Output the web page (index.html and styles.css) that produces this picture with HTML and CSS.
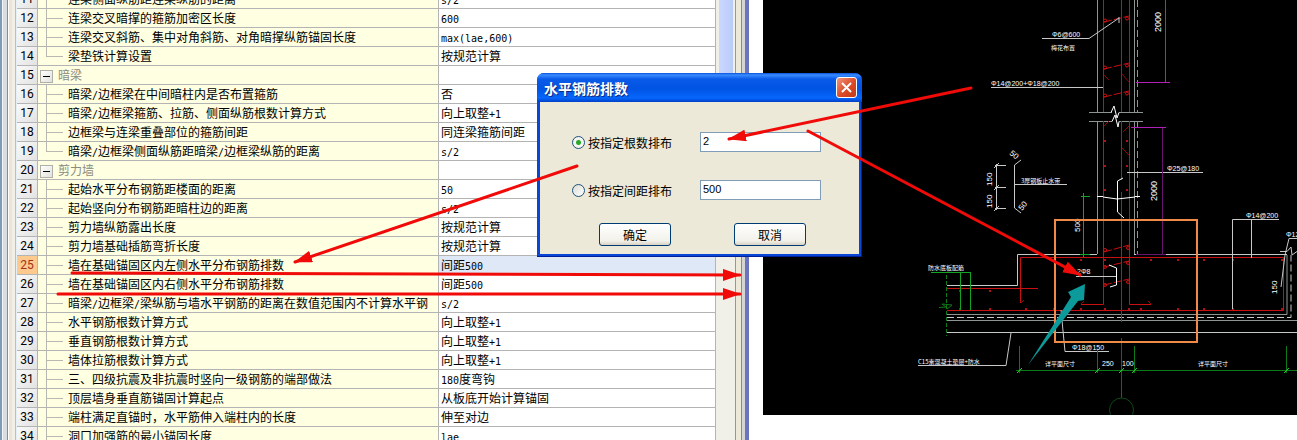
FILE: index.html
```html
<!DOCTYPE html>
<html lang="zh-CN">
<head>
    <meta charset="UTF-8">
    <meta name="viewport" content="width=device-width, initial-scale=1.0">
    <title>水平钢筋排数</title>
    <link rel="stylesheet" href="styles.css">
</head>
<body>
    <div class="workspace">
        <!-- 计算设置 -->
        <section class="settings">
            <div class="frame-left"></div>
            <div class="grid-area">
                <table class="grid">
                    <colgroup>
                        <col class="col-no">
                        <col class="col-name">
                        <col>
                    </colgroup>
                    <tbody>
                        <tr><th>11</th><td class="name">连梁侧面纵筋距连梁纵筋的距离</td><td><span class="code">s/2</span></td></tr>
                        <tr><th>12</th><td class="name">连梁交叉暗撑的箍筋加密区长度</td><td><span class="code">600</span></td></tr>
                        <tr><th>13</th><td class="name">连梁交叉斜筋、集中对角斜筋、对角暗撑纵筋锚固长度</td><td><span class="code">max(lae,600)</span></td></tr>
                        <tr><th>14</th><td class="name last">梁垫铁计算设置</td><td>按规范计算</td></tr>
                        <tr><th>15</th><td class="group"><button class="toggle" aria-label="折叠暗梁"></button>暗梁</td><td></td></tr>
                        <tr><th>16</th><td class="name">暗梁<span class="code">/</span>边框梁在中间暗柱内是否布置箍筋</td><td>否</td></tr>
                        <tr><th>17</th><td class="name">暗梁<span class="code">/</span>边框梁箍筋、拉筋、侧面纵筋根数计算方式</td><td>向上取整<span class="code">+1</span></td></tr>
                        <tr><th>18</th><td class="name">边框梁与连梁重叠部位的箍筋间距</td><td>同连梁箍筋间距</td></tr>
                        <tr><th>19</th><td class="name last">暗梁<span class="code">/</span>边框梁侧面纵筋距暗梁<span class="code">/</span>边框梁纵筋的距离</td><td><span class="code">s/2</span></td></tr>
                        <tr><th>20</th><td class="group"><button class="toggle" aria-label="折叠剪力墙"></button>剪力墙</td><td></td></tr>
                        <tr><th>21</th><td class="name">起始水平分布钢筋距楼面的距离</td><td><span class="code">50</span></td></tr>
                        <tr><th>22</th><td class="name">起始竖向分布钢筋距暗柱边的距离</td><td><span class="code">s/2</span></td></tr>
                        <tr><th>23</th><td class="name">剪力墙纵筋露出长度</td><td>按规范计算</td></tr>
                        <tr><th>24</th><td class="name">剪力墙基础插筋弯折长度</td><td>按规范计算</td></tr>
                        <tr class="selected"><th>25</th><td class="name">墙在基础锚固区内左侧水平分布钢筋排数</td><td>间距<span class="code">500</span></td></tr>
                        <tr><th>26</th><td class="name">墙在基础锚固区内右侧水平分布钢筋排数</td><td>间距<span class="code">500</span></td></tr>
                        <tr><th>27</th><td class="name">暗梁<span class="code">/</span>边框梁<span class="code">/</span>梁纵筋与墙水平钢筋的距离在数值范围内不计算水平钢</td><td><span class="code">s/2</span></td></tr>
                        <tr><th>28</th><td class="name">水平钢筋根数计算方式</td><td>向上取整<span class="code">+1</span></td></tr>
                        <tr><th>29</th><td class="name">垂直钢筋根数计算方式</td><td>向上取整<span class="code">+1</span></td></tr>
                        <tr><th>30</th><td class="name">墙体拉筋根数计算方式</td><td>向上取整<span class="code">+1</span></td></tr>
                        <tr><th>31</th><td class="name">三、四级抗震及非抗震时竖向一级钢筋的端部做法</td><td><span class="code">180</span>度弯钩</td></tr>
                        <tr><th>32</th><td class="name">顶层墙身垂直筋锚固计算起点</td><td>从板底开始计算锚固</td></tr>
                        <tr><th>33</th><td class="name">端柱满足直锚时，水平筋伸入端柱内的长度</td><td>伸至对边</td></tr>
                        <tr><th>34</th><td class="name">洞口加强筋的最小锚固长度</td><td><span class="code">lae</span></td></tr>
                    </tbody>
                </table>
            </div>
            <div class="scrollbar"><div class="thumb"></div></div>
            <div class="frame-right"></div>
        </section>

        <!-- 基础剖面图 -->
        <section class="drawing">
            <svg viewBox="763 0 534 415" fill="none" stroke-width="1">
                <!-- 墙身轮廓 -->
                <g stroke="#8d9692">
                    <path d="M1097.5 0V112M1134.5 0V112M1097.5 121V254M1134.5 121V254"/>
                    <path d="M1137.5 0V112M1137.5 121V254" stroke-dasharray="7 3"/>
                    <path d="M1089 112.5H1112M1119 112.5H1143M1089 121.5H1112M1119 121.5H1143"/>
                    <path d="M947 314.5H1287V255M947 320.5H1297"/>
                    <path d="M947 317.5H1291V255" stroke="#c8c8c8" stroke-dasharray="7 3"/>
                </g>
                <path d="M1111 112.5L1114 106L1117 118L1119 112.5M1112 121.5L1115 115L1118 127L1119 121.5" stroke="#fff"/>
                <g stroke="#c4c9c6">
                    <path d="M947 285.5H1017.500V254.500H1097M1134 254.500H1287"/>
                    <path d="M947 332.5H1297"/>
                </g>

                <!-- 钢筋 -->
                <g stroke="#c81010">
                    <path d="M1103.5 0V112M1129.500 0V112M1121.500 0V112M1121.500 121V180M1121.500 192V322M1121.500 338V398"/>
                    <path d="M1103.500 121V304.500H1081M1129.500 121V304.500H1151"/>
                    <path d="M947 288.500H1038M1020.500 303V257.500H1283.500V310.500H947"/>
                    <path d="M1081 304l3-3M1151 304l-3-3M1021 303l3-3" stroke="#8a0808"/>
                    <path d="M1104 22L1129 16M1104 69L1129 63M1104 97L1129 91M1104 252L1129 245M1104 267L1129 261M1104 285L1129 279" stroke-dasharray="8 2"/>
                    <path d="M1104 75L1109 80M1122 74L1129 82M1104 126L1109 121M1123 132L1129 126M1122 148L1129 155" stroke="#8a0808"/>
                </g>
                <g fill="none" stroke="#d01010">
                    <circle cx="1105" cy="20.500" r="1.500"/><circle cx="1127" cy="18.500" r="1.500"/>
                    <circle cx="1105" cy="67.500" r="1.500"/><circle cx="1127" cy="65.500" r="1.500"/>
                    <circle cx="1105" cy="95.500" r="1.500"/><circle cx="1127" cy="93.500" r="1.500"/>
                    <circle cx="1105" cy="250" r="1.500"/><circle cx="1128" cy="248" r="1.500"/>
                    <circle cx="1105" cy="267" r="1.500"/><circle cx="1128" cy="263" r="1.500"/>
                    <circle cx="1105" cy="285" r="1.500"/><circle cx="1128" cy="282" r="1.500"/>
                </g>
                <path d="M1104 141h2M1104 166h2M1104 190h2M1126 141h2M1126 166h2M1126 190h2M959 309h2M989 309h2M1025 309h2M1053 309h2M1080 309h2M1104 309h2M1128 309h2M1140 309h2M1177 309h2M1203 309h2M1232 309h2M1281 309h2M989 291h2M959 291h2M1080 260h2M1104 260h2M1150 260h2M1177 260h2M1203 260h2M1232 260h2M1281 260h2" stroke="#b01010" stroke-width="2"/>

                <!-- 止水带 -->
                <g stroke="#fff">
                    <path d="M1123 178L1117.500 181V212L1124 218M1097 196.500H1103M1103 197L1117 199L1135 197M1135 196.500H1140"/>
                    <path d="M1109 265L1116.500 268V285L1110 287"/>
                </g>

                <!-- 引线 -->
                <g stroke="#c8c8c8">
                    <path d="M1042 38.500H1089L1119 18M1119 17v6"/>
                    <path d="M991 87.500H1103"/>
                    <path d="M1127 172.500H1203"/>
                    <path d="M1232.500 309V219.500H1279M1251.500 220V258"/>
                    <path d="M1297 238.500H1289L1285 255L1281 287M1280 251.500H1287L1291 247L1292 255L1297 251.500"/>
                    <path d="M1076 276.500H1116"/>
                    <path d="M1061 310L1065 351.500H1109"/>
                    <path d="M918 365.500H1006L1011 333"/>
                    <path d="M1021 160L1014.500 165V208L1021 213M1014 184.500H1067"/>
                    <path d="M996.500 164V210M995 165.500H1006M995 187.500H1006M995 208.500H1006M994 168l5-5M994 190l5-5M994 211l5-5"/>
                </g>

                <!-- 尺寸线 -->
                <g stroke="#b020b8">
                    <path d="M1165.500 0V82M1136 82.500H1170M1131 127.500H1166"/>
                    <path d="M1162.500 128V254M1136 254.500H1166" stroke="#67146e"/>
                </g>
                <g stroke="#12a522">
                    <path d="M1083.500 193V257M1081 196.500H1090M1080 254.500H1090"/>
                    <path d="M931 272.500H971M960.500 272V310M970.500 272V310"/>
                </g>
                <g stroke="#0b7a17">
                    <path d="M946.500 275V336" stroke-dasharray="4 2"/>
                    <path d="M939 307.500L946 307L942 304L952 305L947 309"/>
                    <path d="M1016 370.500H1297M1019.500 346V373M1097.500 350V373M1134.500 346V373M1286.500 346V373"/>
                    <path d="M1017 373l5-5M1095 373l5-5M1119 373l5-5M1132 373l5-5M1284 373l5-5" stroke="#1fd02f"/>
                    <circle cx="1121.500" cy="410" r="12" stroke="#0b4a12"/>
                </g>

                <!-- 标注文字 -->
                <g class="note">
                    <text x="1052" y="37">Φ6@600</text>
                    <text x="1051" y="50" class="cn">梅花布置</text>
                    <text x="991" y="86">Φ14@200+Φ18@200</text>
                    <text x="1167" y="171">Φ25@180</text>
                    <text x="1246" y="218">Φ14@200</text>
                    <text x="1286" y="237">Φ12</text>
                    <text x="1077" y="274">2Φ8</text>
                    <text x="1072" y="350">Φ18@150</text>
                    <text x="1102" y="366">250</text>
                    <text x="1122" y="366">100</text>
                    <text x="1021" y="183" class="cn">3厚钢板止水带</text>
                    <text x="928" y="270" class="cn">防水底板配筋</text>
                    <text x="918" y="364" class="cn">C15素混凝土垫层+防水</text>
                    <text x="1045" y="366" class="cn">详平面尺寸</text>
                    <text x="1198" y="366" class="cn">详平面尺寸</text>
                    <text class="big" transform="translate(1161 32) rotate(-90)">2000</text>
                    <text class="big" transform="translate(1157 201) rotate(-90)">2000</text>
                    <text class="mid" transform="translate(1080 232) rotate(-90)">500</text>
                    <text class="mid" transform="translate(992 186) rotate(-90)">150</text>
                    <text class="mid" transform="translate(992 208) rotate(-90)">150</text>
                    <text class="mid" transform="translate(1277 294) rotate(-90)">150</text>
                    <text class="mid" transform="translate(1009 154) rotate(40)">50</text>
                    <text class="mid" transform="translate(1022 211) rotate(-50)">50</text>
                </g>
            </svg>
        </section>

        <!-- 对话框 -->
        <form class="dialog">
            <header class="dialog-title">
                <h1>水平钢筋排数</h1>
                <button type="button" class="close" aria-label="关闭">
                    <svg viewBox="0 0 19 19"><path d="M5 5L14 14M14 5L5 14" stroke="#fff" stroke-width="2"/></svg>
                </button>
            </header>
            <div class="dialog-body">
                <div class="option">
                    <input type="radio" name="mode" id="by-count" checked>
                    <label for="by-count">按指定根数排布</label>
                    <input type="text" class="field" aria-label="根数" value="2">
                </div>
                <div class="option">
                    <input type="radio" name="mode" id="by-space">
                    <label for="by-space">按指定间距排布</label>
                    <input type="text" class="field" aria-label="间距" value="500">
                </div>
                <div class="actions">
                    <button type="button" class="btn">确定</button>
                    <button type="button" class="btn">取消</button>
                </div>
            </div>
        </form>

        <!-- 批注箭头 -->
        <svg class="marks" width="1297" height="440" viewBox="0 0 1297 440" fill="none">
            <defs>
                <marker id="head" markerUnits="userSpaceOnUse" markerWidth="18" markerHeight="12" refX="17" refY="6" orient="auto">
                    <path d="M0 0L18 6L0 12Z" fill="#f00a08"/>
                </marker>
            </defs>
            <rect x="1055" y="220" width="142" height="122" stroke="#f08a48" stroke-width="2"/>
            <g stroke="#f00a08" stroke-width="3" stroke-linecap="round">
                <path d="M971 88L729 139" marker-end="url(#head)"/>
                <path d="M808 131L1080 275" marker-end="url(#head)"/>
                <path d="M577 166L295 262" marker-end="url(#head)"/>
                <path d="M72 273L740 275" marker-end="url(#head)"/>
                <path d="M58 294L740 294" marker-end="url(#head)"/>
            </g>
            <path d="M1028 365L1071 297L1068 292L1085 284L1084 300L1078 301Z" fill="#0c9a9a"/>
        </svg>
    </div>
</body>
</html>
```
FILE: styles.css
```css
* {
    margin: 0;
    padding: 0;
    box-sizing: border-box;
}

body {
    font-family: "Noto Sans CJK SC", sans-serif;
    font-size: 12px;
    color: #000;
    background: #fff;
    overflow: hidden;
}

.workspace {
    position: relative;
    display: flex;
    gap: 14px;
    height: 100vh;
    overflow: hidden;
}

/* 左侧设置窗口 */
.settings {
    display: flex;
    flex: 0 1 749px;
    min-width: 0;
}

.frame-left {
    flex: none;
    width: 17px;
    background: linear-gradient(to right,
        #7f9bb8 0 2px, #f2f4f6 2px 3px, #d9dde2 3px 7px, #7690ac 7px 8px,
        #fff 8px 9px, #ebe5d8 9px 12px, #f3efe6 12px 15px, #a2c6dc 15px 16px, #e4f0f6 16px 17px);
}

.grid-area {
    flex: 1;
    min-width: 0;
    overflow: hidden;
}

/* 列表已滚动，首行只露出一半 */
.grid {
    width: 100%;
    margin-top: -10px;
    table-layout: fixed;
    border-collapse: separate;
    border-spacing: 0;
}

.col-no {
    width: 21px;
}

.col-name {
    width: 401px;
}

.grid th,
.grid td {
    height: 19px;
    line-height: 18px;
    border-right: 1px solid #b4b4b4;
    border-bottom: 1px solid #b4b4b4;
    font-weight: normal;
    text-align: left;
    white-space: nowrap;
    overflow: hidden;
}

.grid th {
    font-family: Roboto, sans-serif;
    text-align: center;
    vertical-align: top;
    background: linear-gradient(135deg, #fafafa, #e2e2e2);
}

.grid td {
    padding-left: 2px;
    vertical-align: top;
    background: #fff;
}

.grid .name,
.grid .group {
    background-color: #ffffe1;
}

.grid .name {
    padding-left: 30px;
    background-image: linear-gradient(#b8b8b0, #b8b8b0), linear-gradient(#b8b8b0, #b8b8b0);
    background-repeat: no-repeat;
    background-position: 8px 0, 9px 9px;
    background-size: 1px 100%, 16px 1px;
}

.grid .name.last {
    background-size: 1px 10px, 16px 1px;
}

.grid .group {
    color: #8c8c80;
}

.toggle {
    position: relative;
    width: 13px;
    height: 13px;
    margin-right: 5px;
    vertical-align: -2px;
    border: 1px solid #b0b0a8;
    background: linear-gradient(135deg, #fff, #e0e0dc);
}

.toggle::after {
    content: "";
    position: absolute;
    top: 5px;
    left: 2px;
    width: 7px;
    height: 1px;
    background: #000;
}

.grid .selected th {
    color: #a03020;
    background: #fdc98c;
}

.grid .selected td:last-child {
    background: #dfe8f6;
}

.code {
    font-family: "DejaVu Sans Mono", monospace;
    font-size: 10px;
    line-height: 1;
}

.scrollbar {
    flex: none;
    width: 19px;
    padding: 0 2px 0 3px;
    background: #f1f0e8;
}

.thumb {
    width: 14px;
    height: 200px;
    background: linear-gradient(to right, #cad8fd, #bacbf8);
}

.frame-right {
    flex: none;
    width: 14px;
    background: linear-gradient(to right,
        #7f9db9 0 1px, #ece9d8 1px 6px, #8c8c84 6px 7px, #d4d4d4 7px 10px, #6c74be 10px 14px);
}

/* 右侧图纸 */
.drawing {
    flex: 1;
    min-width: 0;
}

.drawing svg {
    display: block;
    width: 100%;
    background: #000;
}

.note {
    font-family: "Liberation Sans", sans-serif;
    font-size: 7px;
    fill: #fff;
}

.note .cn {
    font-family: "Noto Sans CJK SC", sans-serif;
    font-size: 6px;
}

.note .mid {
    font-size: 8px;
}

.note .big {
    font-size: 9px;
}

/* 对话框 */
.dialog {
    position: absolute;
    top: 73px;
    left: 537px;
    width: 325px;
    padding: 0 3px 3px;
    border-radius: 7px 7px 0 0;
    background: #0a46d6;
    box-shadow: inset -1px -1px 0 #00209a;
}

.dialog-title {
    display: flex;
    align-items: center;
    justify-content: space-between;
    height: 29px;
    margin: 0 -3px;
    padding: 0 5px 0 7px;
    border-radius: 7px 7px 0 0;
    background: linear-gradient(#0a50d8, #3a8cff 2px, #0a5ae8 6px, #0054e3 16px, #0666fc 25px, #0040c8);
}

.dialog-title h1 {
    font-size: 14px;
    font-weight: bold;
    color: #fff;
    text-shadow: 1px 1px 0 #0a2a80;
}

.close {
    width: 21px;
    height: 21px;
    border: 1px solid #fff;
    border-radius: 3px;
    background: linear-gradient(135deg, #f0967c, #dc4a26 55%, #c03a18);
}

.close svg {
    display: block;
}

.dialog-body {
    padding: 30px 38px 8px 32px;
    background: #ece9d8;
}

.option {
    display: flex;
    align-items: center;
    height: 20px;
    margin-bottom: 28px;
}

.option input[type="radio"] {
    appearance: none;
    width: 13px;
    height: 13px;
    margin-right: 3px;
    border: 1px solid #1c5180;
    border-radius: 50%;
    background: linear-gradient(135deg, #dcdcd4, #fff);
}

.option input[type="radio"]:checked {
    background: radial-gradient(circle, #2aa82a 0 2px, #f4f4f0 3px);
}

.option label {
    flex: 1;
}

.field {
    width: 121px;
    height: 20px;
    padding: 0 2px 2px;
    border: 1px solid #7f9db9;
    background: #fff;
    font-family: "Liberation Sans", sans-serif;
    font-size: 11px;
}

.actions {
    display: flex;
    gap: 63px;
    margin-top: -5px;
    padding-left: 27px;
}

.btn {
    width: 72px;
    height: 23px;
    border: 1px solid #003c74;
    border-radius: 3px;
    background: linear-gradient(#fff, #f2f1ea 80%, #d8d2c4);
    font-family: inherit;
    font-size: 12px;
}

/* 批注层 */
.marks {
    position: absolute;
    top: 0;
    left: 0;
    pointer-events: none;
}
```
